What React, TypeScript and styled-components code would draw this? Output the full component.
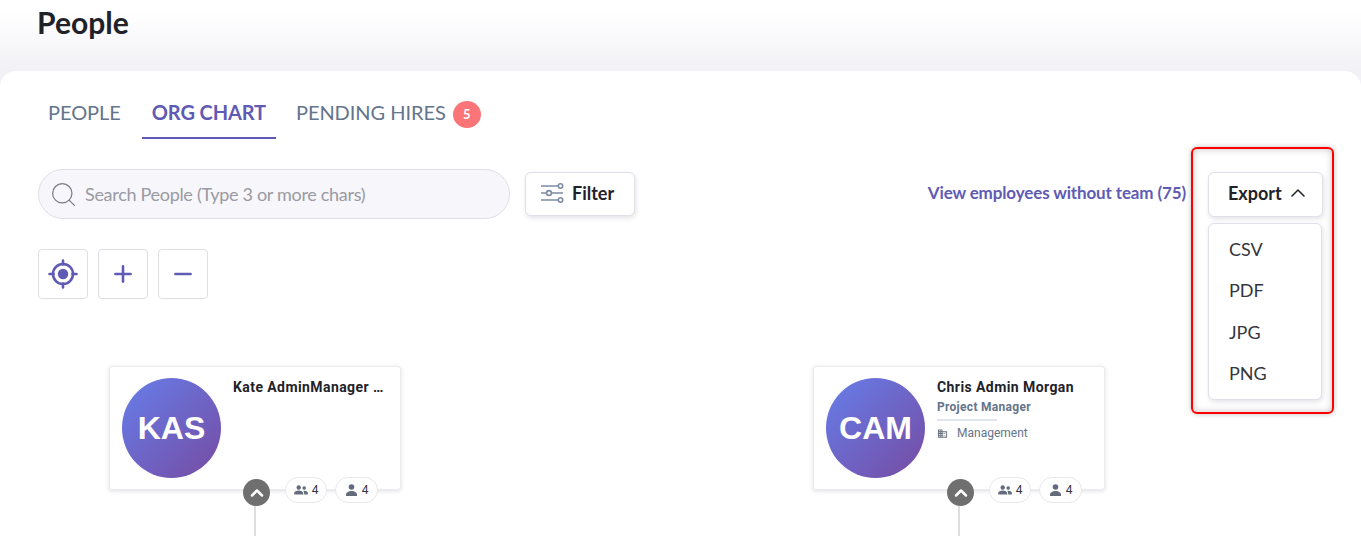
import styled, { createGlobalStyle } from "styled-components";
import { ChevronUp, Minus, Plus, Search } from "lucide-react";

const GlobalStyle = createGlobalStyle`
    html, body {
        margin: 0;
        height: 536px;
        overflow: hidden;
        background: #fff;
        font-family: Lato, sans-serif;
    }
`;

const Page = styled.div`
    position: relative;
    height: 536px;
    overflow: hidden;
    background: linear-gradient(180deg, #ffffff 12px, #f1f1f6 71px);
`;

const Header = styled.header`
    height: 71px;
    padding-left: 37px;
    box-sizing: border-box;
`;

const Title = styled.h1`
    margin: 0;
    font-size: 30px;
    line-height: 44px;
    font-weight: 700;
    letter-spacing: 0.05px;
    color: #1f2229;
`;

const Panel = styled.main`
    height: 465px;
    box-sizing: border-box;
    padding: 26px 38px 0;
    background: #fff;
    border-radius: 16px 16px 0 0;
`;

const Tabs = styled.nav`
    display: flex;
    gap: 10px;
    height: 42px;
`;

const Tab = styled.a<{ $active?: boolean }>`
    display: flex;
    align-items: center;
    gap: 7px;
    height: 42px;
    box-sizing: border-box;
    padding: 0 10px 11px;
    font-size: 20px;
    letter-spacing: -0.05px;
    font-weight: ${(p) => (p.$active ? 700 : 400)};
    color: ${(p) => (p.$active ? "#5f5bb4" : "#64748b")};
    border-bottom: 2px solid ${(p) => (p.$active ? "#5f5bb4" : "transparent")};
`;

const OrgTab = styled(Tab)`
    margin-left: 1px;
    letter-spacing: -0.12px;
    padding-left: 10px;
    padding-right: 10px;
`;

const Badge = styled.span`
    display: flex;
    align-items: center;
    justify-content: center;
    width: 28px;
    height: 27px;
    margin-top: 5px;
    border-radius: 50%;
    background: #fb7477;
    color: #fff;
    font-size: 13px;
    font-weight: 700;
`;

const Toolbar = styled.div`
    display: flex;
    align-items: center;
    gap: 15px;
    margin-top: 30px;
    height: 50px;
`;

const SearchBox = styled.div`
    display: flex;
    align-items: center;
    gap: 7px;
    width: 472px;
    height: 50px;
    box-sizing: border-box;
    padding-left: 10px;
    background: #f6f6fb;
    border: 1px solid #dfdfe8;
    border-radius: 25px;
    font-size: 18px;
    letter-spacing: -0.3px;
    color: #9a9aa2;
`;

const FilterButton = styled.button`
    display: flex;
    align-items: center;
    gap: 8px;
    width: 110px;
    height: 44px;
    padding: 0 14px 2px;
    box-sizing: border-box;
    background: #fff;
    border: 1px solid #e0e0e8;
    border-radius: 6px;
    box-shadow: 1px 2px 5px rgba(60, 60, 90, 0.14);
    font-family: inherit;
    font-size: 18px;
    font-weight: 700;
    color: #1f2229;
`;

const ViewLink = styled.a`
    margin-left: auto;
    margin-right: 7px;
    margin-top: -4px;
    font-size: 17px;
    font-weight: 700;
    letter-spacing: -0.13px;
    color: #5f5bb4;
`;

const ExportWrap = styled.div`
    position: relative;
    width: 115px;
    height: 45px;
`;

const ExportButton = styled(FilterButton)`
    width: 115px;
    height: 45px;
    padding: 0 0 2px 19px;
    gap: 4px;
`;

const Menu = styled.ul`
    position: absolute;
    top: 51px;
    left: 0;
    width: 114px;
    height: 177px;
    box-sizing: border-box;
    margin: 0;
    padding: 5px 0;
    list-style: none;
    background: #fff;
    border: 1px solid #e0e0e8;
    border-radius: 6px;
    box-shadow: 1px 2px 5px rgba(60, 60, 90, 0.14);
`;

const MenuItem = styled.li`
    height: 41.5px;
    line-height: 41px;
    padding-left: 20px;
    font-size: 18px;
    color: #33363d;
`;

const Highlight = styled.div`
    position: absolute;
    left: 1191px;
    top: 147px;
    width: 143px;
    height: 267px;
    box-sizing: border-box;
    border: 2px solid #f00;
    border-radius: 6px;
    box-shadow: 0 0 5px rgba(90, 90, 90, 0.4), inset 0 0 7px rgba(90, 90, 90, 0.35);
    pointer-events: none;
`;

const ZoomBar = styled.div`
    display: flex;
    gap: 10px;
    margin-top: 30px;
`;

const ZoomButton = styled.button`
    display: flex;
    align-items: center;
    justify-content: center;
    width: 50px;
    height: 50px;
    padding: 0;
    background: #fff;
    border: 1px solid #dfdfe3;
    border-radius: 4px;
    color: #5f5bb4;
`;

const Chart = styled.section`
    display: flex;
    gap: 412px;
    margin-top: 67px;
    padding-left: 71px;
`;

const Node = styled.div`
    position: relative;
    width: 292px;
    height: 170px;
`;

const Card = styled.article`
    display: flex;
    gap: 12px;
    width: 292px;
    height: 124px;
    box-sizing: border-box;
    padding: 11px 12px 12px;
    background: #fff;
    border: 1px solid #ececf0;
    border-radius: 3px;
    box-shadow: 0 1px 4px rgba(50, 50, 70, 0.16);
    font-family: Roboto, sans-serif;
`;

const Avatar = styled.div`
    flex: none;
    display: flex;
    align-items: center;
    justify-content: center;
    width: 99px;
    height: 100px;
    border-radius: 50%;
    background: linear-gradient(135deg, #667eea 0%, #764ba2 100%);
    color: #fff;
    font-family: "Liberation Sans", sans-serif;
    font-size: 32px;
    font-weight: 700;
`;

const Info = styled.div`
    min-width: 0;
    flex: 1;
`;

const Name = styled.div`
    overflow: hidden;
    white-space: nowrap;
    text-overflow: ellipsis;
    font-size: 14px;
    line-height: 18px;
    font-weight: 700;
    letter-spacing: 0.42px;
    color: #1f2229;
`;

const Role = styled.div`
    margin-top: 3px;
    font-size: 12px;
    line-height: 16px;
    font-weight: 700;
    letter-spacing: 0.3px;
    color: #64748b;
`;

const Divider = styled.div`
    width: 60px;
    height: 2px;
    margin-top: 4px;
    background: #e2e6ec;
`;

const Dept = styled.div`
    display: flex;
    align-items: center;
    gap: 9px;
    margin-top: 4px;
    font-size: 12px;
    line-height: 16px;
    color: #64748b;
`;

const Toggle = styled.button`
    position: absolute;
    left: 134px;
    top: 113px;
    display: flex;
    align-items: center;
    justify-content: center;
    width: 27px;
    height: 27px;
    padding: 0;
    border: none;
    border-radius: 50%;
    background: #6f6f6f;
    color: #fff;
`;

const Stem = styled.div`
    position: absolute;
    left: 145px;
    top: 140px;
    width: 2px;
    height: 30px;
    background: #dedede;
`;

const Counts = styled.div`
    position: absolute;
    left: 176px;
    top: 111px;
    display: flex;
    gap: 8px;
`;

const Count = styled.div<{ $width: number }>`
    display: flex;
    align-items: center;
    justify-content: center;
    gap: 4px;
    width: ${(p) => p.$width}px;
    height: 26px;
    box-sizing: border-box;
    background: #fff;
    border: 1px solid #e8e8ec;
    border-radius: 13px;
    font-family: Roboto, sans-serif;
    font-size: 12px;
    color: #33363d;
`;

const TargetIcon = () => (
    <svg width="30" height="30" viewBox="0 0 30 30" fill="none" stroke="#5f5bb4">
        <circle cx="15" cy="15" r="10" strokeWidth="2.6" />
        <circle cx="15" cy="15" r="5.2" fill="#5f5bb4" stroke="none" />
        <path d="M15 1.5v4M15 24.5v4M1.5 15h4M24.5 15h4" strokeWidth="2.6" strokeLinecap="round" />
    </svg>
);

const SlidersIcon = () => (
    <svg width="24" height="22" viewBox="0 0 24 22" fill="none" stroke="#7d8ba5" strokeWidth="1.6">
        <path d="M1 4h17M1 11h5M12 11h11M1 18h17" />
        <circle cx="20.5" cy="4" r="2.2" />
        <circle cx="9" cy="11" r="2.4" />
        <circle cx="20.5" cy="18" r="2.2" />
    </svg>
);

const TeamIcon = () => (
    <svg width="14" height="10" viewBox="0 0 15 11" fill="#646c7c">
        <circle cx="5" cy="2.8" r="2.4" />
        <circle cx="11" cy="3.3" r="2" />
        <path d="M0 10.5V9c0-1.8 2.6-3 5-3s5 1.2 5 3v1.500zM11 10.500V9c0-1-.4-1.900-1.200-2.600.5-.1 1-.2 1.500-.2 1.800 0 3.700.9 3.700 2.400v1.900z" />
    </svg>
);

const PersonIcon = () => (
    <svg width="13" height="12" viewBox="0 0 13 12" fill="#646c7c">
        <circle cx="6.500" cy="3" r="2.800" />
        <path d="M1 12v-1.500C1 8.400 4 7 6.500 7s5.500 1.400 5.500 3.500V12z" />
    </svg>
);

const BuildingIcon = () => (
    <svg width="11" height="11" viewBox="0 0 24 24" fill="#646c7c">
        <path d="M12 7V3H2v18h20V7H12zM6 19H4v-2h2v2zm0-4H4v-2h2v2zm0-4H4V9h2v2zm0-4H4V5h2v2zm4 12H8v-2h2v2zm0-4H8v-2h2v2zm0-4H8V9h2v2zm0-4H8V5h2v2zm10 12h-8v-2h2v-2h-2v-2h2v-2h-2V9h8v10zm-2-8h-2v2h2v-2zm0 4h-2v2h2v-2z" />
    </svg>
);

type Person = {
    initials: string;
    name: string;
    role?: string;
    dept?: string;
};

const people: Person[] = [
    { initials: "KAS", name: "Kate AdminManager Smith" },
    { initials: "CAM", name: "Chris Admin Morgan", role: "Project Manager", dept: "Management" },
];

export default function App() {
    return (
        <Page>
            <GlobalStyle />
            <Header>
                <Title>People</Title>
            </Header>
            <Panel>
                <Tabs>
                    <Tab>PEOPLE</Tab>
                    <OrgTab $active>ORG CHART</OrgTab>
                    <Tab>
                        PENDING HIRES
                        <Badge>5</Badge>
                    </Tab>
                </Tabs>
                <Toolbar>
                    <SearchBox>
                        <Search size={29} strokeWidth={1} color="#777a84" />
                        Search People (Type 3 or more chars)
                    </SearchBox>
                    <FilterButton>
                        <SlidersIcon />
                        Filter
                    </FilterButton>
                    <ViewLink>View employees without team (75)</ViewLink>
                    <ExportWrap>
                        <ExportButton>
                            Export
                            <ChevronUp size={24} strokeWidth={1.5} />
                        </ExportButton>
                        <Menu>
                            <MenuItem>CSV</MenuItem>
                            <MenuItem>PDF</MenuItem>
                            <MenuItem>JPG</MenuItem>
                            <MenuItem>PNG</MenuItem>
                        </Menu>
                    </ExportWrap>
                </Toolbar>
                <ZoomBar>
                    <ZoomButton>
                        <TargetIcon />
                    </ZoomButton>
                    <ZoomButton>
                        <Plus size={26} strokeWidth={2.4} />
                    </ZoomButton>
                    <ZoomButton>
                        <Minus size={26} strokeWidth={2.4} />
                    </ZoomButton>
                </ZoomBar>
                <Chart>
                    {people.map((person) => (
                        <Node key={person.initials}>
                            <Card>
                                <Avatar>{person.initials}</Avatar>
                                <Info>
                                    <Name>{person.name}</Name>
                                    {person.role && <Role>{person.role}</Role>}
                                    {person.role && <Divider />}
                                    {person.dept && (
                                        <Dept>
                                            <BuildingIcon />
                                            {person.dept}
                                        </Dept>
                                    )}
                                </Info>
                            </Card>
                            <Toggle>
                                <ChevronUp size={20} strokeWidth={3} />
                            </Toggle>
                            <Stem />
                            <Counts>
                                <Count $width={42}>
                                    <TeamIcon />4
                                </Count>
                                <Count $width={43}>
                                    <PersonIcon />4
                                </Count>
                            </Counts>
                        </Node>
                    ))}
                </Chart>
            </Panel>
            <Highlight />
        </Page>
    );
}
